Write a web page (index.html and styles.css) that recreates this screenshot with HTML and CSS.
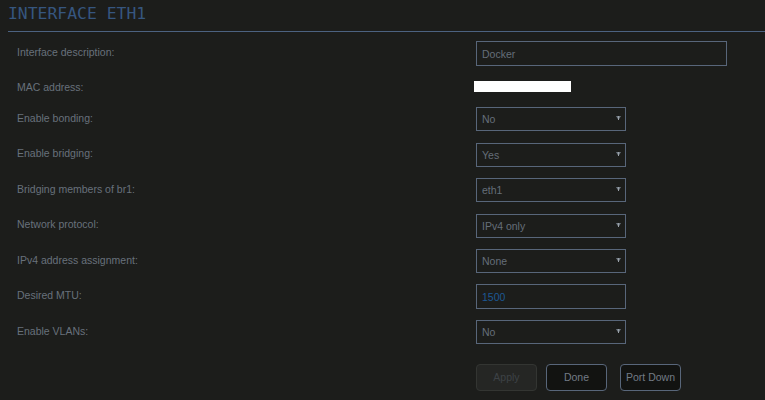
FILE: index.html
```html
<!DOCTYPE html>
<html lang="en">
<head>
    <meta charset="UTF-8">
    <title>Interface eth1</title>
    <link rel="stylesheet" href="styles.css">
</head>
<body>

    <!-- Page Title -->
    <h1 class="title">INTERFACE ETH1</h1>

    <!-- Interface settings -->
    <form class="settings">
        <div class="row row-first">
            <label>Interface description:</label>
            <input type="text" class="field wide" value="Docker">
        </div>
        <div class="row row-mac">
            <label class="mac-label">MAC address:</label>
            <span class="mac"></span>
        </div>
        <div class="row">
            <label>Enable bonding:</label>
            <div class="select"><span>No</span><svg width="5" height="4" viewBox="0 0 5 4"><path d="M0 0h5L2.5 4z" fill="#6f7882"/><rect x="2" y="0" width="1" height="4" fill="#9aa1a8"/></svg></div>
        </div>
        <div class="row">
            <label>Enable bridging:</label>
            <div class="select"><span>Yes</span><svg width="5" height="4" viewBox="0 0 5 4"><path d="M0 0h5L2.5 4z" fill="#6f7882"/><rect x="2" y="0" width="1" height="4" fill="#9aa1a8"/></svg></div>
        </div>
        <div class="row">
            <label>Bridging members of br1:</label>
            <div class="select"><span>eth1</span><svg width="5" height="4" viewBox="0 0 5 4"><path d="M0 0h5L2.5 4z" fill="#6f7882"/><rect x="2" y="0" width="1" height="4" fill="#9aa1a8"/></svg></div>
        </div>
        <div class="row">
            <label>Network protocol:</label>
            <div class="select"><span>IPv4 only</span><svg width="5" height="4" viewBox="0 0 5 4"><path d="M0 0h5L2.5 4z" fill="#6f7882"/><rect x="2" y="0" width="1" height="4" fill="#9aa1a8"/></svg></div>
        </div>
        <div class="row">
            <label>IPv4 address assignment:</label>
            <div class="select"><span>None</span><svg width="5" height="4" viewBox="0 0 5 4"><path d="M0 0h5L2.5 4z" fill="#6f7882"/><rect x="2" y="0" width="1" height="4" fill="#9aa1a8"/></svg></div>
        </div>
        <div class="row">
            <label>Desired MTU:</label>
            <input type="text" class="field mtu" value="1500">
        </div>
        <div class="row">
            <label>Enable VLANs:</label>
            <div class="select"><span>No</span><svg width="5" height="4" viewBox="0 0 5 4"><path d="M0 0h5L2.5 4z" fill="#6f7882"/><rect x="2" y="0" width="1" height="4" fill="#9aa1a8"/></svg></div>
        </div>

        <!-- Buttons -->
        <div class="actions">
            <button type="button" class="btn" disabled>Apply</button>
            <button type="button" class="btn">Done</button>
            <button type="button" class="btn btn-port">Port Down</button>
        </div>
    </form>

</body>
</html>
```

FILE: styles.css
```css
body {
    margin: 0;
    background-color: #1c1d1b;
    font-family: "Liberation Sans", Arial, sans-serif;
    font-size: 10.5px;
    color: #68717b;
    height: 400px;
    overflow: hidden;
}

/* Page Title */
.title {
    margin: 0 0 0 8px;
    height: 32px;
    box-sizing: border-box;
    padding: 3px 0 0 0;
    border-bottom: 1px solid #4c6280;
    font-family: "DejaVu Sans Mono", monospace;
    font-weight: normal;
    font-size: 16.4px;
    line-height: 22px;
    color: #36567f;
}

.settings {
    padding: 4px 0 0 17px;
}

.row {
    display: grid;
    grid-template-columns: 459px auto;
    align-items: center;
    height: 35.5px;
}

.row-first {
    height: 35px;
}

.row-mac {
    height: 30.5px;
}

.row label {
    padding-bottom: 3px;
}

.row .mac-label {
    padding: 1px 0 0 0;
}

.mac {
    display: block;
    width: 97px;
    height: 11px;
    margin-left: -2px;
    background: #fff;
}

.field {
    box-sizing: border-box;
    height: 25px;
    margin: 0;
    padding: 0 0 0 5px;
    border: 1px solid #58667a;
    background: transparent;
    font-family: inherit;
    font-size: 10.5px;
    color: #656e79;
    outline: none;
}

.wide {
    width: 251px;
}

.mtu {
    width: 150px;
    color: #1d5894;
}

.select {
    box-sizing: border-box;
    width: 150px;
    height: 24px;
    border: 1px solid #58667a;
    display: flex;
    align-items: center;
    justify-content: space-between;
    padding: 0 4px 0 5px;
    color: #656e79;
}

.select svg {
    margin-top: -2px;
}

/* Buttons */
.actions {
    display: flex;
    gap: 9px;
    margin: 13.5px 0 0 459px;
}

.btn {
    box-sizing: border-box;
    width: 61px;
    height: 27px;
    border: 1px solid #58667a;
    border-radius: 4px;
    background-color: #121311;
    font-family: inherit;
    font-size: 10.5px;
    color: #727b85;
    padding: 0;
}

.btn:disabled {
    background-color: #252624;
    border-color: #333532;
    color: #3d4246;
}

.btn-port {
    margin-left: 4px;
}
```
